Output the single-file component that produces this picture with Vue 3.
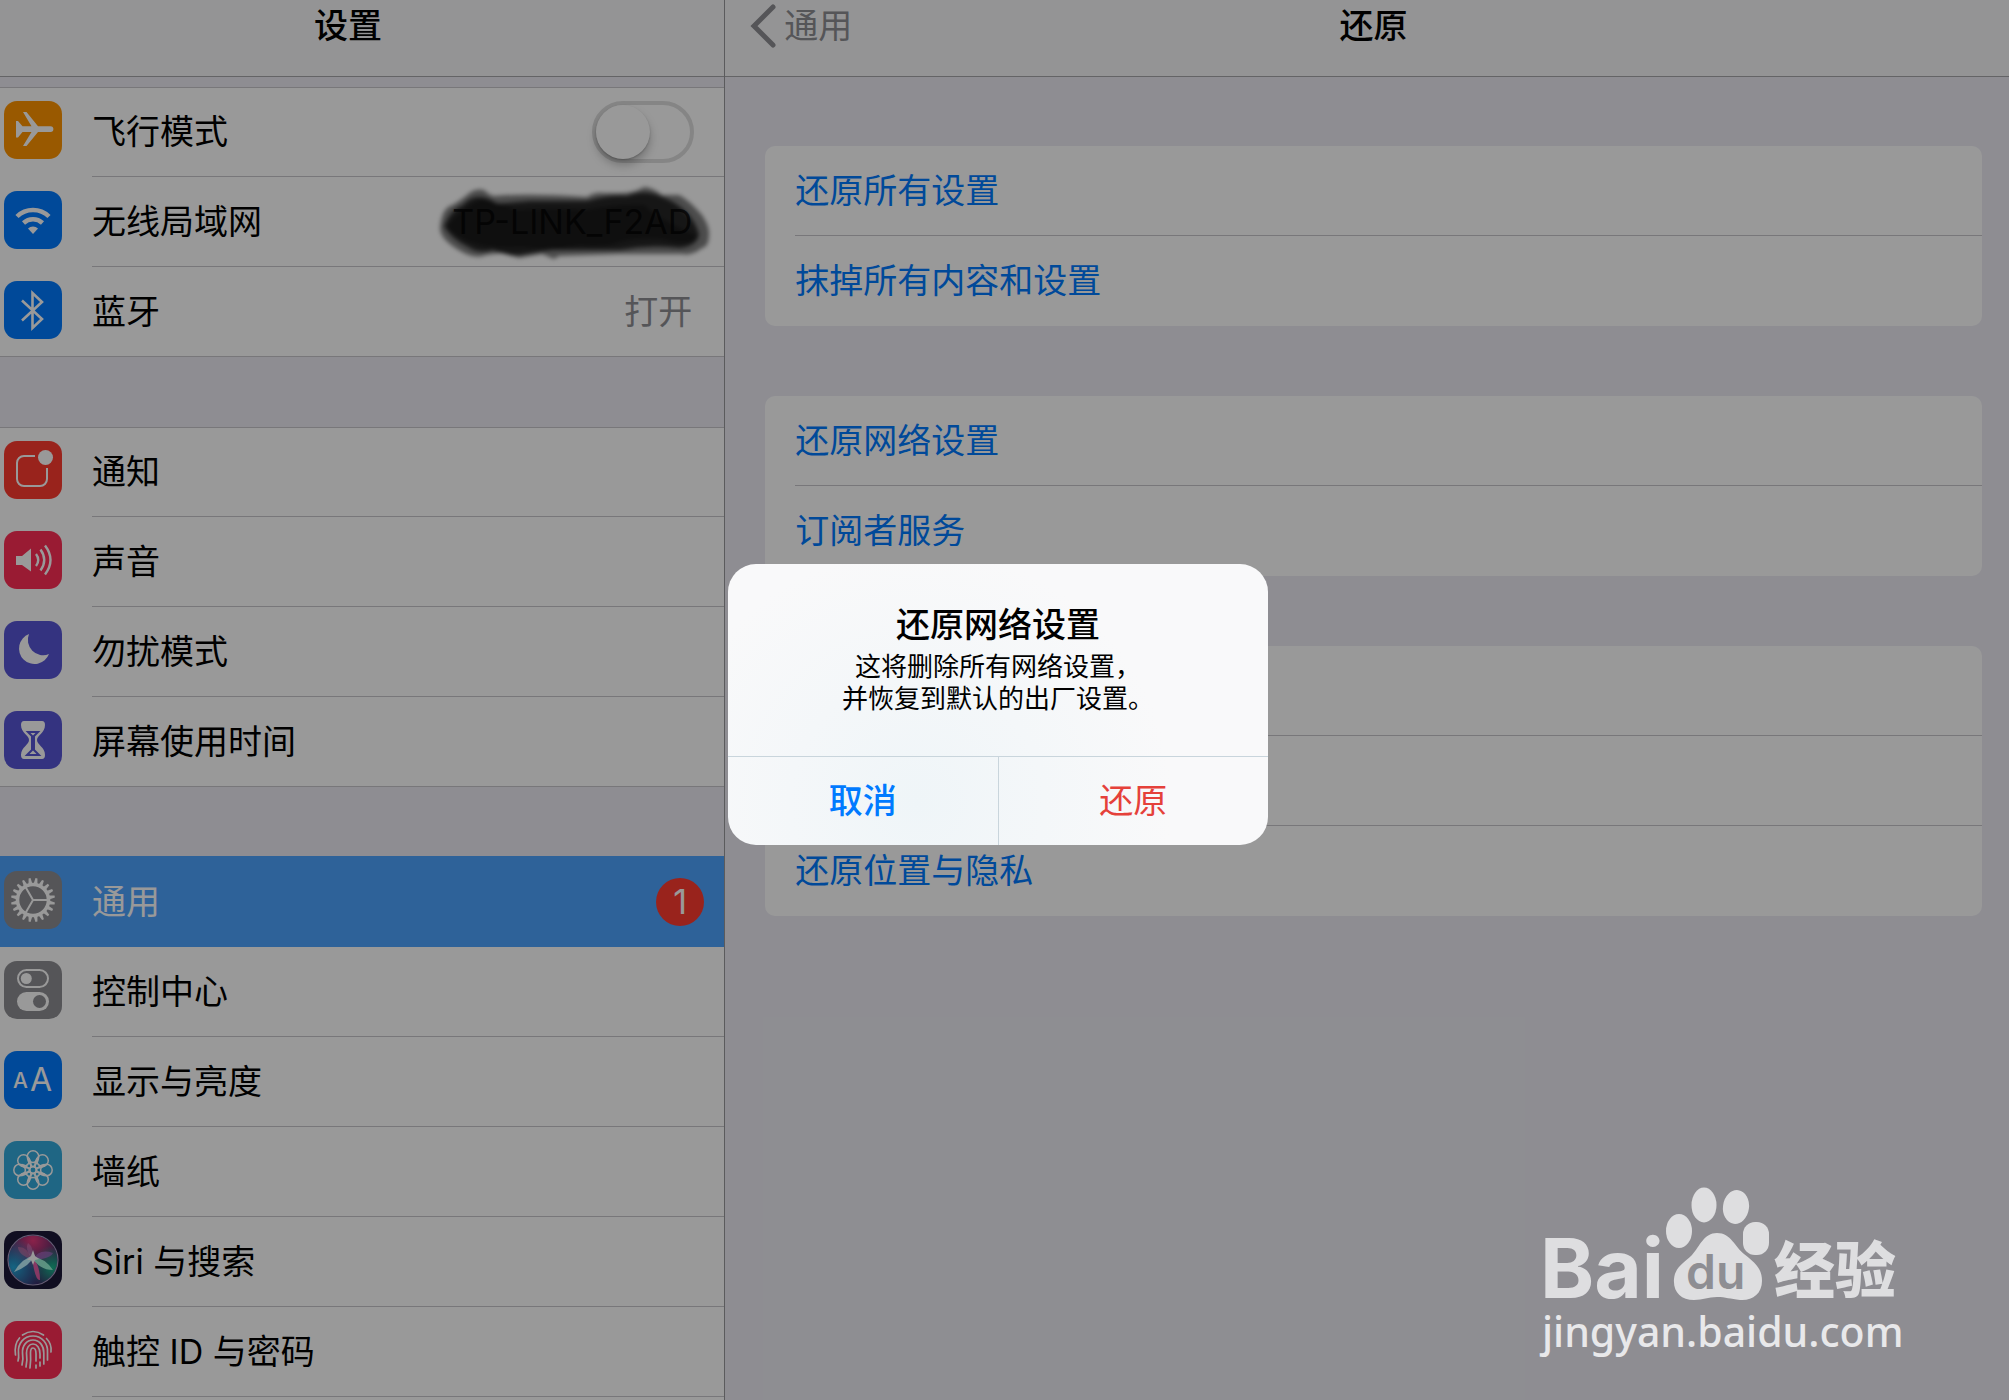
<!--
  Settings screen: category list on the left, reset options on the right,
  with the "reset network settings" confirmation open on top.
-->
<script setup>
import { ref } from 'vue'

const airplaneMode = ref(false)

const groups = [
  [
    { icon: 'airplane', label: '飞行模式', toggle: true },
    { icon: 'wifi', label: '无线局域网', value: 'TP-LINK_F2AD', hidden: true },
    { icon: 'bluetooth', label: '蓝牙', value: '打开' },
  ],
  [
    { icon: 'notifications', label: '通知' },
    { icon: 'sound', label: '声音' },
    { icon: 'dnd', label: '勿扰模式' },
    { icon: 'screentime', label: '屏幕使用时间' },
  ],
  [
    { icon: 'general', label: '通用', badge: 1, active: true },
    { icon: 'control', label: '控制中心' },
    { icon: 'display', label: '显示与亮度' },
    { icon: 'wallpaper', label: '墙纸' },
    { icon: 'siri', label: 'Siri 与搜索' },
    { icon: 'touchid', label: '触控 ID 与密码' },
  ],
]

const resetGroups = [
  ['还原所有设置', '抹掉所有内容和设置'],
  ['还原网络设置', '订阅者服务'],
  ['', '', '还原位置与隐私'],
]

const teeth = Array.from({ length: 20 }, (_, i) => i * 18)
const petals = Array.from({ length: 8 }, (_, i) => i * 45)
</script>

<template>
  <div class="settings">
    <nav class="sidebar">
      <header class="bar bar--side">
        <h1 class="bar__title">设置</h1>
      </header>

      <ul v-for="(group, g) in groups" :key="g" class="group">
        <li v-for="item in group" :key="item.icon">
          <component
            :is="item.toggle ? 'label' : 'a'"
            :href="item.toggle ? null : '#' + item.icon"
            class="item"
            :class="{ 'item--active': item.active }"
          >
            <svg class="item__icon" :class="`item__icon--${item.icon}`" viewBox="0 0 58 58" aria-hidden="true">
              <path
                v-if="item.icon === 'airplane'"
                fill="#fff"
                d="M12 20h2l4.500 5.200h9L19 11h3.500L34 25.200h12.500a2.900 2.900 0 0 1 0 5.800H34L22.500 45H19l8.500-14h-9L14 36.500h-2z"
              />
              <g v-else-if="item.icon === 'wifi'" fill="none" stroke="#fff" stroke-width="4.5">
                <path d="M13 25.5a23 23 0 0 1 32 0" />
                <path d="M19.5 32a14 14 0 0 1 19 0" />
                <path d="M24 37.500a7.500 7.500 0 0 1 10 0l-5 5.500z" fill="#fff" stroke="none" />
              </g>
              <path
                v-else-if="item.icon === 'bluetooth'"
                fill="none"
                stroke="#fff"
                stroke-width="2.6"
                d="M18 19.500l20 18.500-9.500 9V12l9.500 9-20 18.500"
              />
              <g v-else-if="item.icon === 'notifications'">
                <path d="M31 15H20a7 7 0 0 0-7 7v16a7 7 0 0 0 7 7h16a7 7 0 0 0 7-7V27" fill="none" stroke="#fff" stroke-width="2" />
                <circle cx="41.5" cy="16.5" r="7.5" fill="#fff" />
              </g>
              <g v-else-if="item.icon === 'sound'" fill="none" stroke="#fff" stroke-width="2.4">
                <path d="M12 25h6l9-7.500v23L18 34h-6z" fill="#fff" stroke="none" />
                <path d="M32 23q4.500 6 0 12" />
                <path d="M36.500 18.500q7.500 10.500 0 21" />
                <path d="M41 14.500q11 14.500 0 29" />
              </g>
              <path v-else-if="item.icon === 'dnd'" fill="#fff" d="M25 13a15.500 15.500 0 1 0 20 20A15.300 15.300 0 0 1 25 13z" />
              <g v-else-if="item.icon === 'screentime'">
                <path
                  fill="#fff"
                  d="M20 10h18q3 0 3 4c0 8-8 10-8 15s8 7 8 15q0 4-3 4H20q-3 0-3-4c0-8 8-10 8-15s-8-7-8-15q0-4 3-4z"
                />
                <path fill="none" stroke="#5856d6" stroke-width="2" d="M24 21h10l-4 4v14l5 5H23l5-5V25z" />
              </g>
              <g v-else-if="item.icon === 'general'" fill="#fff">
                <path v-for="a in teeth" :key="a" d="M27 13l1-6h2l1 6z" :transform="`rotate(${a + 9} 29 29)`" />
                <circle cx="29" cy="29" r="15.5" fill="none" stroke="#fff" stroke-width="3.6" />
                <path d="M29 29h15M29 29l-7.500-13M29 29l-7.500 13" stroke="#fff" stroke-width="2" />
              </g>
              <g v-else-if="item.icon === 'control'" fill="#fff">
                <rect x="14" y="9" width="30" height="17" rx="8.5" fill="none" stroke="#fff" stroke-width="2" />
                <circle cx="22.3" cy="17.5" r="5.5" />
                <rect x="13" y="31" width="32" height="19" rx="9.5" />
                <circle cx="35.5" cy="40.5" r="6.5" fill="#8e8e93" />
              </g>
              <g v-else-if="item.icon === 'display'" class="item__letters" fill="#fff">
                <text x="9" y="37" font-size="21" font-weight="500">A</text>
                <text x="26" y="40" font-size="32">A</text>
              </g>
              <g v-else-if="item.icon === 'wallpaper'" fill="none" stroke="#fff" stroke-width="1.5">
                <g v-for="a in petals" :key="a" :transform="`rotate(${a} 29 29)`">
                  <circle cx="29" cy="15.6" r="5.8" />
                  <path d="M29 25.800c-3-2-4.600-4.500-5.400-8M29 25.800c3-2 4.600-4.500 5.400-8" />
                </g>
                <circle cx="29" cy="29" r="3.2" />
              </g>
              <g v-else-if="item.icon === 'siri'">
                <defs>
                  <radialGradient id="siri-top" cx="50%" cy="10%" r="60%">
                    <stop offset="0" stop-color="#e8397c" />
                    <stop offset="1" stop-color="#e8397c" stop-opacity="0" />
                  </radialGradient>
                  <radialGradient id="siri-left" cx="10%" cy="65%" r="60%">
                    <stop offset="0" stop-color="#23a7d8" />
                    <stop offset="1" stop-color="#23a7d8" stop-opacity="0" />
                  </radialGradient>
                  <radialGradient id="siri-right" cx="90%" cy="65%" r="45%">
                    <stop offset="0" stop-color="#18b58c" />
                    <stop offset="1" stop-color="#18b58c" stop-opacity="0" />
                  </radialGradient>
                </defs>
                <circle cx="29" cy="29" r="24.5" fill="#3a2a66" />
                <circle cx="29" cy="29" r="24.5" fill="url(#siri-top)" />
                <circle cx="29" cy="29" r="24.5" fill="url(#siri-left)" />
                <circle cx="29" cy="29" r="24.5" fill="url(#siri-right)" />
                <path d="M29 29Q14 24 14 16q9-1 15 13z" fill="#ff7fb0" opacity=".4" />
                <path d="M29 29Q20 18 24 12q6 4 5 17z" fill="#f0a0e0" opacity=".35" />
                <path d="M29 29q6-12 20-7-3 6-20 7z" fill="#b96ad6" opacity=".6" />
                <path d="M28 26q8 8 8 23-5 1-8-23z" fill="#ff5fae" opacity=".85" />
                <path d="M31 24q-5 11-21 17 8-14 21-17z" fill="#bff3ff" />
                <path d="M27 25q14 2 22 14-14 0-22-14z" fill="#a4ffe0" opacity=".9" />
                <path d="M29 19l2 6 4 3-4 1-2 5-2-5-4 0 4-4z" fill="#fff" />
                <circle cx="29" cy="29" r="25" fill="none" stroke="#a99bc4" stroke-width="1.2" />
              </g>
              <g v-else fill="none" stroke="#fff" stroke-width="1.7" stroke-linecap="round">
                <path d="M18.500 14q10.500-7 21 0" />
                <path d="M11.500 34q-1.500-11 4-17M42.500 17.500Q48 23 47 31" />
                <path d="M14 40q1-3 .5-8c-1-9 5-17 14.500-17s15 8 14.500 16v8" />
                <path d="M18 44q1.500-6 .5-12c-.5-7 4-13 10.500-13s11 6 10.800 13v11" />
                <path d="M22 46q1.500-7 .5-14c0-5 2.500-9 6.500-9s7 4 7 10v4M36 41v4" />
                <path d="M26 47q1-8 .5-15c0-3 1-5 2.500-5s3 2 3 6v7M32 44v3" />
              </g>
            </svg>
            <span class="item__body">
              <span class="item__label">{{ item.label }}</span>
              <input v-if="item.toggle" v-model="airplaneMode" class="switch" type="checkbox" />
              <span v-if="item.value" class="item__value" :class="{ 'item__value--hidden': item.hidden }">{{ item.value }}</span>
              <span v-if="item.badge" class="item__badge">{{ item.badge }}</span>
              <svg v-if="item.hidden" class="item__scribble" viewBox="0 0 272 78" aria-hidden="true">
                <path
                  opacity=".5"
                  d="M1 43Q2 28 9 22q8-3 19-12 8-7 17-5 5 5 10 6 36-3 93 1 8-5 16-4h17q14 0 24-6 8 0 18 8h17q10 5 23 20 8 12 7 20 0 12-7 13-10 8-20 6l-63 0-60 2-5 3-12-5-23 4-17-5-16 2q-8 4-20-1Q1 56 1 43z"
                />
                <path
                  opacity=".7"
                  d="M5 41Q12 24 24 20q8-9 17-8 8 0 17 7l33-3 57 0q20-6 40-5 12-5 23-3 10 2 23 9 20 12 26 32-2 12-19 14-30-4-60 2l-67 0q-16 2-33 5-14 1-27-5-14 4-23-2Q12 54 5 41z"
                />
                <path
                  opacity=".35"
                  d="M8 42q14-20 34-27 22 2 34 10 40-3 70 0 30-6 60-5 6 10 54 32-8 10-38 2-30-2-50 6-20 2-30 0-30 6-60 2Q30 66 8 42z"
                />
              </svg>
            </span>
          </component>
        </li>
      </ul>
    </nav>

    <main class="detail">
      <header class="bar bar--detail">
        <a class="back" href="#general">
          <svg class="back__arrow" viewBox="0 0 26 44" aria-hidden="true">
            <path d="M23 3L4 22l19 19" fill="none" stroke="currentColor" stroke-width="5" stroke-linecap="round" />
          </svg>
          通用
        </a>
        <h2 class="bar__title">还原</h2>
      </header>

      <ul v-for="(group, g) in resetGroups" :key="g" class="card">
        <li v-for="(label, i) in group" :key="i" class="card__row">
          <button v-if="label" class="card__action" type="button">{{ label }}</button>
        </li>
      </ul>
    </main>

    <!-- Confirmation -->
    <div class="overlay">
      <section class="alert" role="alertdialog" aria-labelledby="alert-title" aria-describedby="alert-text">
        <div class="alert__content">
          <h3 id="alert-title" class="alert__title">还原网络设置</h3>
          <p id="alert-text" class="alert__text">这将删除所有网络设置，<br />并恢复到默认的出厂设置。</p>
        </div>
        <div class="alert__actions">
          <button class="alert__button alert__button--cancel" type="button">取消</button>
          <button class="alert__button alert__button--danger" type="button">还原</button>
        </div>
      </section>
    </div>

    <div class="watermark">
      <svg class="watermark__logo" viewBox="0 0 360 120">
        <text class="watermark__name" x="-2" y="112" font-size="82">Bai</text>
        <ellipse cx="137" cy="45" rx="13" ry="17" />
        <ellipse cx="162" cy="19" rx="12.5" ry="17.5" />
        <ellipse cx="194" cy="21" rx="13" ry="17" transform="rotate(8 194 21)" />
        <rect x="201" y="36" width="26" height="33" rx="12" />
        <path d="M175 47c14 0 18 14 27 21 11 9 18 14 18 27 0 13-10 20-22 19-10-1-14-3-23-3s-14 3-23 3c-13 0-21-8-20-21 1-12 10-16 18-24 8-9 12-22 25-22z" />
        <text class="watermark__du" x="144" y="103" font-size="48">du</text>
        <text class="watermark__cn" x="232" y="107" font-size="61">经验</text>
      </svg>
      <span class="watermark__url">jingyan.baidu.com</span>
    </div>
  </div>
</template>

<style>
body {
  margin: 0;
}
</style>

<style scoped>
.settings {
  position: relative;
  display: grid;
  grid-template-columns: 36.1% 1fr;
  min-height: 100vh;
  overflow: hidden;
  background: #edecf4;
  color: #000;
  font-family: Inter, "Noto Sans CJK SC", sans-serif;
  font-size: 34px;
  line-height: 40px;
}
ul {
  margin: 0;
  padding: 0;
  list-style: none;
}
a {
  color: inherit;
  text-decoration: none;
}
button {
  border: 0;
  background: none;
  font: inherit;
  cursor: pointer;
}

.bar {
  position: relative;
  box-sizing: border-box;
  height: 77px;
  padding-top: 6px;
  border-bottom: 1px solid #a7a7aa;
  background: #f7f7f8;
  text-align: center;
}
.bar--side {
  margin-bottom: 10px;
  padding-right: 28px;
}
.bar--detail {
  margin-bottom: 69px;
  padding-right: 27px;
  padding-left: 40px;
}
.bar__title {
  margin: 0;
  font-size: 34px;
  font-weight: 500;
}
.back {
  position: absolute;
  top: 4px;
  left: 25px;
  display: flex;
  align-items: center;
  gap: 8px;
  color: #8e8e93;
}
.back__arrow {
  width: 26px;
  height: 44px;
}

.sidebar {
  display: flex;
  flex-direction: column;
  border-right: 1px solid #98989c;
}
.group {
  margin-bottom: 70px;
  background: #fff;
}
.group:last-child {
  flex: 1;
  margin-bottom: 0;
}
.item {
  display: flex;
  box-sizing: border-box;
  height: 90px;
  padding-left: 4px;
  gap: 30px;
}
.item__icon {
  flex: none;
  width: 58px;
  height: 58px;
  margin-top: 14px;
  border-radius: 13px;
  background: #007aff;
}
.item__icon--airplane { background: #ff9500; }
.item__icon--notifications { background: #ff3b30; }
.item__icon--sound,
.item__icon--touchid { background: #ff2d55; }
.item__icon--dnd,
.item__icon--screentime { background: #5856d6; }
.item__icon--general,
.item__icon--control { background: #8e8e93; }
.item__icon--wallpaper { background: #34aadc; }
.item__icon--siri { background: #1c1838; }
.item__letters {
  font-family: Inter, sans-serif;
}
.item__body {
  position: relative;
  display: flex;
  flex: 1;
  align-items: center;
  justify-content: space-between;
  border-bottom: 1px solid #c8c7cc;
}
.group li:first-child .item {
  box-shadow: inset 0 1px #c8c7cc;
}
.group:not(:last-child) li:last-child .item {
  box-shadow: inset 0 -1px #c8c7cc;
}
.group li:first-child .item--active {
  background: #4ea3ff;
  box-shadow: 0 -1px #4ea3ff;
  color: #fff;
}
.item--active .item__body {
  border-color: transparent;
}
.item__value {
  margin-right: 32px;
  color: #8e8e93;
}
.item__value--hidden {
  color: #4a4a4e;
}
.item__badge {
  width: 48px;
  margin-right: 20px;
  border-radius: 24px;
  background: #ff3b30;
  line-height: 48px;
  text-align: center;
}
.item__scribble {
  position: absolute;
  top: 8px;
  right: 13px;
  width: 272px;
  height: 78px;
  filter: blur(2px);
}
.switch {
  width: 102px;
  height: 62px;
  margin: 0 30px 0 0;
  border: 4px solid #dedede;
  border-radius: 31px;
  appearance: none;
}
.switch::before {
  content: "";
  display: block;
  width: 54px;
  height: 54px;
  border-radius: 50%;
  background: #fff;
  box-shadow: 0 6px 10px rgba(0, 0, 0, 0.25), 0 1px 2px rgba(0, 0, 0, 0.2);
}
.switch:checked {
  border-color: #4cd964;
  background: #4cd964;
}
.switch:checked::before {
  margin-left: 40px;
}

.card {
  margin: 0 27px 70px 40px;
  padding-left: 30px;
  border-radius: 10px;
  background: #fff;
}
.card__row {
  box-sizing: border-box;
  height: 90px;
  border-bottom: 1px solid #c8c7cc;
}
.card__row:last-child {
  border-bottom: 0;
}
.card__action {
  width: 100%;
  height: 100%;
  padding: 0;
  color: #007aff;
  text-align: left;
}

.overlay {
  position: absolute;
  inset: 0;
  display: flex;
  align-items: center;
  justify-content: center;
  padding: 9px 13px 0 0;
  background: rgba(0, 0, 0, 0.4);
}
.alert {
  width: 540px;
  border-radius: 28px;
  overflow: hidden;
  background: radial-gradient(circle at 35% 85%, #eff5f8, #f9f9fa 60%);
  text-align: center;
}
.alert__content {
  padding: 41px 32px;
}
.alert__title {
  margin: 0;
  font-size: 34px;
  font-weight: 500;
}
.alert__text {
  margin: 6px 0 0;
  font-size: 26px;
  line-height: 32px;
}
.alert__actions {
  display: flex;
  border-top: 1px solid #c9d5dc;
}
.alert__button {
  flex: 1;
  height: 88px;
}
.alert__button--cancel {
  border-right: 1px solid #c9d5dc;
  color: #007aff;
  font-weight: 500;
}
.alert__button--danger {
  color: #e5413a;
}

.watermark {
  position: absolute;
  right: 107px;
  bottom: 44px;
  display: flex;
  flex-direction: column;
  width: 360px;
}
.watermark__logo {
  width: 360px;
  height: 120px;
  overflow: visible;
  fill: #dedee0;
}
.watermark__name {
  font-family: Inter, sans-serif;
  font-weight: 700;
}
.watermark__du {
  fill: #8e8e93;
  font-family: Inter, sans-serif;
  font-weight: 600;
}
.watermark__cn {
  font-family: "Noto Sans CJK SC", sans-serif;
  font-weight: 900;
}
.watermark__url {
  color: #e8e8ea;
  font-family: "Noto Sans", sans-serif;
  font-size: 41px;
  font-weight: 500;
  line-height: 50px;
}
</style>
